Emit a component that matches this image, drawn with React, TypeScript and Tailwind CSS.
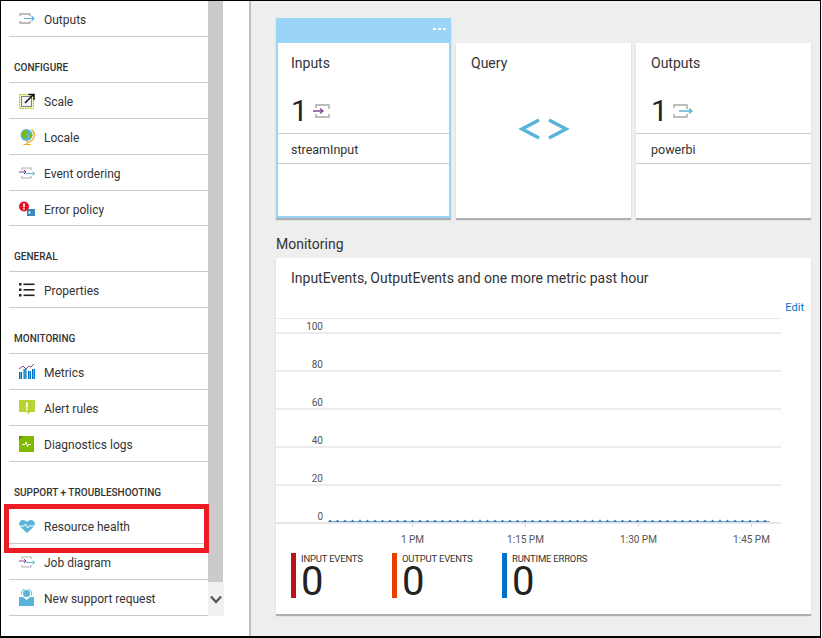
import React from "react";

const font = { fontFamily: 'Roboto, "Noto Sans", sans-serif' };

const IconOut = () => (
  <svg width="16" height="11" viewBox="0 0 16 11" fill="none">
    <path d="M1 3V1h10v2M1 8v2h10V8" stroke="#a8a8a8" strokeWidth="1.300" />
    <path d="M5 5.500h10M12.500 3L15 5.500 12.500 8" stroke="#59b4d9" strokeWidth="1.100" />
  </svg>
);
const IconScale = () => (
  <svg width="16" height="16" viewBox="0 0 16 16" fill="none">
    <rect x="0.500" y="1.500" width="14" height="14" fill="#eef4c8" stroke="#a4c400" strokeDasharray="1.500 1" />
    <rect x="2.500" y="3.500" width="10" height="10" fill="#f4f4f4" stroke="#808080" />
    <path d="M6 10L14 2M9.500 1.500H15V7" stroke="#111" strokeWidth="1.500" />
  </svg>
);
const IconGlobe = () => (
  <svg width="16" height="18" viewBox="0 0 16 18">
    <circle cx="7.500" cy="7" r="6" fill="#59b4d9" />
    <path d="M3 4l4-2 2 2-2 3 1 3-3 1-2-4zM10 6l3-1 .5 3-2.500 3z" fill="#7fba00" />
    <path d="M12.500 1.500a7 7 0 0 1-5 12.500M8 14v2M4.500 16.500h7" stroke="#f0a30a" strokeWidth="1.200" fill="none" />
  </svg>
);
const IconEvent = () => (
  <svg width="16" height="12" viewBox="0 0 16 12" fill="none">
    <path d="M3 3V1h9v2M3 9v2h9V9" stroke="#b0b0b0" strokeWidth="1.100" />
    <path d="M0 5h7M5 3l2 2-2 2" stroke="#804998" strokeWidth="1" />
    <path d="M7 6.500h8.500M13.500 4.500l2 2-2 2" stroke="#59b4d9" strokeWidth="1" />
  </svg>
);
const IconError = () => (
  <svg width="16" height="15" viewBox="0 0 16 15">
    <rect x="8" y="8" width="8" height="7" fill="#3a87b8" />
    <rect x="9.500" y="10.500" width="2" height="2" fill="#fff" />
    <circle cx="5" cy="5.500" r="5" fill="#e81123" />
    <rect x="4.200" y="2.300" width="1.600" height="4" fill="#fff" />
    <rect x="4.200" y="7.100" width="1.600" height="1.600" fill="#fff" />
  </svg>
);
const IconProps = () => (
  <svg width="16" height="14" viewBox="0 0 16 14" fill="#222">
    <rect x="0" y="0" width="2.500" height="2.500" />
    <rect x="0" y="5.500" width="2.500" height="2.500" />
    <rect x="0" y="11" width="2.500" height="2.500" />
    <rect x="4.500" y="0.500" width="11" height="1.600" />
    <rect x="4.500" y="6" width="11" height="1.600" />
    <rect x="4.500" y="11.500" width="11" height="1.600" />
  </svg>
);
const IconMetrics = () => (
  <svg width="16" height="15" viewBox="0 0 16 15" fill="none">
    <path d="M0 5l4-3 3 3 3-3 2 1 3-3" stroke="#804998" strokeWidth="1" />
    <path d="M0 8h3v7H0zM4.500 5h3v10h-3zM9 7h3v8H9zM13 5h3v10h-3z" fill="#0072c6" />
    <path d="M1 8h1v7H1zM5.500 5h1v10h-1zM10 7h1v8h-1zM14 5h1v10h-1z" fill="#59b4d9" />
  </svg>
);
const IconAlert = () => (
  <svg width="16" height="15" viewBox="0 0 16 15">
    <path d="M1 0h14a1 1 0 0 1 1 1v10a1 1 0 0 1-1 1h-4l-2 2.500L8 12H1a1 1 0 0 1-1-1V1a1 1 0 0 1 1-1z" fill="#b8d432" />
    <rect x="7" y="2.500" width="1.800" height="5" fill="#fff" />
    <rect x="7" y="8.500" width="1.800" height="1.800" fill="#fff" />
  </svg>
);
const IconDiag = () => (
  <svg width="15" height="16" viewBox="0 0 15 16">
    <rect width="15" height="16" fill="#7fba00" />
    <path d="M0 0h4L0 4z" fill="#5a8a00" />
    <path d="M3 8.500h3l1-2.500 1.500 4.500 1-2h2.500" stroke="#fff" strokeWidth="1" fill="none" />
  </svg>
);
const IconHeart = () => (
  <svg width="16" height="14" viewBox="0 0 16 14">
    <path d="M8 14L1 7.500C-1 5 .5 1 4 1c2 0 3.200 1 4 2.200C8.800 2 10 1 12 1c3.500 0 5 4 3 6.500z" fill="#59b4d9" />
    <path d="M0 7h5l1.500-2 2 4 1.500-2h6" stroke="#fff" strokeWidth="1" fill="none" />
  </svg>
);
const IconSupport = () => (
  <svg width="15" height="17" viewBox="0 0 15 17" fill="none">
    <path d="M0 8h4l3.500 3L11 8h4v9H0z" fill="#59b4d9" />
    <circle cx="7.500" cy="4.500" r="3.500" fill="#59b4d9" />
    <path d="M2.500 5.500v-1a5 5 0 0 1 10 0v2" stroke="#59b4d9" strokeWidth="1" />
  </svg>
);

function Row({ icon, label, h = "h-9" }: { icon: React.ReactNode; label: string; h?: string }) {
  return (
    <div className={`${h} flex items-center border-b border-[#cbcbcb] text-[12px] text-[#333]`}>
      <div className="w-[35px] flex justify-center shrink-0">{icon}</div>
      <span className="pt-[3px]">{label}</span>
    </div>
  );
}

function Section({ title }: { title: string }) {
  return (
    <div className="h-[46px] flex items-end pl-[5px] pb-[7px] border-b border-[#cbcbcb] text-[10px] leading-[14px] font-medium text-[#333]">
      {title}
    </div>
  );
}

function Tile({ title, count, icon, item, pad }: { title: string; count: string; icon: React.ReactNode; item: string; pad: string }) {
  return (
    <div className="h-[175px] flex flex-col">
      <div className={`h-[42px] ${pad} pt-[10px] text-[14px] leading-5 text-[#333]`}>{title}</div>
      <div className={`h-[49px] flex items-center gap-[5px] ${pad} pt-[4px] border-b border-[#cbcbcb] text-[30px] leading-none text-[#222]`}>
        <span>{count}</span>
        {icon}
      </div>
      <div className={`h-[30px] flex items-center ${pad} pt-[3px] border-b border-[#cbcbcb] text-[12.500px] text-[#333]`}>{item}</div>
    </div>
  );
}

function Legend({ color, label, w }: { color: string; label: string; w: string }) {
  return (
    <div className={`${w} flex h-[45px]`}>
      <div className={`w-[5px] h-full ${color}`} />
      <div className="ml-[5px] flex flex-col">
        <span className="text-[9.500px] leading-[12px] tracking-[-0.2px] text-[#333] whitespace-nowrap">{label}</span>
        <span className="text-[40px] leading-[33px] text-[#222]">0</span>
      </div>
    </div>
  );
}

function Chart() {
  const ys = [
    [333, "100", 326],
    [371, "80", 364],
    [409, "60", 402],
    [447, "40", 440],
    [485, "20", 478],
    [523, "0", 516],
  ] as const;
  const dots: number[] = [];
  for (let x = 330; x <= 770; x += 7.500) dots.push(x);
  return (
    <svg width="535" height="235" viewBox="276 318 535 235" className="block" style={font}>
      <line x1="276" x2="781" y1="318.500" y2="318.500" stroke="#e8e8e8" />
      {ys.map(([y, l, ty]) => (
        <g key={l}>
          <line x1="276" x2="781" y1={y} y2={y} stroke="#e6e6e6" strokeWidth={y === 523 ? 2 : 1.500} />
          <text x="323" y={ty + 4} textAnchor="end" fontSize="10" fill="#555">{l}</text>
        </g>
      ))}
      <path d="M329 521.500H770" stroke="#6fb0e0" strokeWidth="1.200" />
      {dots.map((x) => (
        <path key={x} d={`M${x - 2} 522L${x} 519.500L${x + 2} 522z`} fill="#2f6fb5" />
      ))}
      {[
        [412.500, "1 PM"],
        [525.500, "1:15 PM"],
        [638.500, "1:30 PM"],
        [751.500, "1:45 PM"],
      ].map(([x, l]) => (
        <g key={l as string}>
          <line x1={x as number} x2={x as number} y1="524" y2="527" stroke="#d8d8d8" />
          <text x={x as number} y="543" textAnchor="middle" fontSize="10" fill="#555">{l}</text>
        </g>
      ))}
    </svg>
  );
}

export default function App() {
  return (
    <div className="relative w-[821px] h-[638px] overflow-hidden bg-white border-l border-t border-r border-b-2 border-black flex" style={font}>
      <div className="w-[248px] h-full flex shrink-0 bg-white">
        <div className="w-[199px] ml-[8px] h-[615px] flex flex-col">
          <Row icon={<IconOut />} label="Outputs" />
          <Section title="CONFIGURE" />
          <Row icon={<IconScale />} label="Scale" />
          <Row icon={<IconGlobe />} label="Locale" />
          <Row icon={<IconEvent />} label="Event ordering" />
          <Row icon={<IconError />} label="Error policy" h="h-[35px]" />
          <Section title="GENERAL" />
          <Row icon={<IconProps />} label="Properties" />
          <Section title="MONITORING" />
          <Row icon={<IconMetrics />} label="Metrics" />
          <Row icon={<IconAlert />} label="Alert rules" />
          <Row icon={<IconDiag />} label="Diagnostics logs" />
          <Section title="SUPPORT + TROUBLESHOOTING" />
          <Row icon={<IconHeart />} label="Resource health" />
          <Row icon={<IconEvent />} label="Job diagram" />
          <Row icon={<IconSupport />} label="New support request" />
        </div>
        <div className="w-[16px] h-[615px] flex flex-col">
          <div className="flex-1 w-[15px] bg-[#cbcbcb]" />
          <div className="h-[34px] bg-[#f0f0f0] flex items-center justify-center">
            <svg width="12" height="9" viewBox="0 0 12 9" fill="none">
              <path d="M1 1.500L6 7l5-5.500" stroke="#555" strokeWidth="2.200" />
            </svg>
          </div>
        </div>
      </div>
      <div className="flex-1 h-full bg-[#eeeeee] border-l-2 border-[#c0c0c0] pl-[25px] pt-[17px]">
        <div className="flex gap-[5px] items-end">
          <div className="w-[175px] h-[200px] flex flex-col bg-white border-x-2 border-b-2 border-[#9bd5f5] shadow-[0_2px_1px_#b0b0b0]">
            <div className="h-[25px] shrink-0 bg-[#9bd5f5] flex justify-end items-center pr-[3px] pb-[3px] gap-[2px]">
              <i className="w-[3px] h-[2px] bg-white" />
              <i className="w-[3px] h-[2px] bg-white" />
              <i className="w-[3px] h-[2px] bg-white" />
            </div>
            <Tile title="Inputs" count="1" item="streamInput" pad="pl-[13px]" icon={
              <svg width="17" height="14" viewBox="0 0 17 14" fill="none">
                <path d="M3 4V1h13v4M3 10v3h13v-3" stroke="#a8a8a8" strokeWidth="1.400" />
                <path d="M0 7h10M7 4.500L10 7l-3 2.500" stroke="#804998" strokeWidth="1.300" />
              </svg>
            } />
          </div>
          <div className="w-[175px] h-[175px] bg-white shadow-[0_2px_1px_#b0b0b0] flex flex-col">
            <div className="h-[42px] pl-[15px] pt-[10px] text-[14px] leading-5 text-[#333]">Query</div>
            <div className="flex-1 flex items-start justify-center pt-[32px]">
              <svg width="52" height="24" viewBox="0 0 52 24" fill="none">
                <path d="M21 3L4 12l17 9M31 3l17 9-17 9" stroke="#59b4d9" strokeWidth="3.500" />
              </svg>
            </div>
          </div>
          <div className="w-[175px] h-[175px] bg-white shadow-[0_2px_1px_#b0b0b0]">
            <Tile title="Outputs" count="1" item="powerbi" pad="pl-[15px]" icon={
              <svg width="20" height="14" viewBox="0 0 20 14" fill="none">
                <path d="M1 4V1h13v4M1 10v3h13v-3" stroke="#a8a8a8" strokeWidth="1.400" />
                <path d="M6 7h13M16 4.500L19 7l-3 2.500" stroke="#59b4d9" strokeWidth="1.300" />
              </svg>
            } />
          </div>
        </div>
        <div className="mt-[16px] h-[24px] text-[14px] leading-5 text-[#333]">Monitoring</div>
        <div className="w-[535px] h-[356px] bg-white shadow-[0_2px_1px_#b0b0b0] flex flex-col">
          <div className="h-[40px] pl-[15px] pt-[10px] text-[14px] leading-5 text-[#333]">InputEvents, OutputEvents and one more metric past hour</div>
          <div className="h-[20px] flex justify-end items-center pr-[7px] text-[11px] text-[#0072c6]">Edit</div>
          <Chart />
          <div className="flex pl-[15px]">
            <Legend color="bg-[#ba141a]" label="INPUT EVENTS" w="w-[101px]" />
            <Legend color="bg-[#e83e00]" label="OUTPUT EVENTS" w="w-[110px]" />
            <Legend color="bg-[#0072c6]" label="RUNTIME ERRORS" w="w-[110px]" />
          </div>
        </div>
      </div>
      <div className="absolute left-[3px] top-[503px] w-[205px] h-[49px] border-[5px] border-[#ed1c24] pointer-events-none" />
    </div>
  );
}
